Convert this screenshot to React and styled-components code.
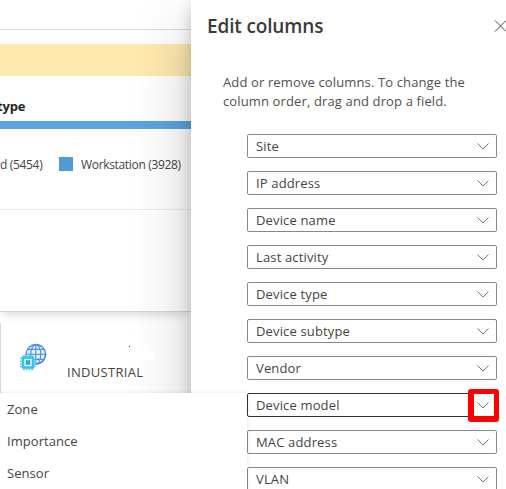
import React from "react";
import styled, { createGlobalStyle } from "styled-components";

const GlobalStyle = createGlobalStyle`
  * { box-sizing: border-box; }
  body { margin: 0; background: #fff; overflow: hidden; }
`;

const Screen = styled.div`
  position: relative;
  display: grid;
  grid-template-columns: 191px 315px;
  width: 506px;
  height: 489px;
  overflow: hidden;
  color: #464442;
  font-family: "Open Sans", "Noto Sans", sans-serif;
  font-size: 13px;
  white-space: nowrap;
`;

const Page = styled.main`
  display: flex;
  flex-direction: column;
  overflow: hidden;
  background: #fff;
`;

const TopBar = styled.header`
  height: 30px;
  flex: none;
  border-bottom: 1px solid #dcdcdc;
`;

const Summary = styled.section`
  height: 282px;
  flex: none;
  padding-top: 14px;
  border-bottom: 1px solid #d4d4d4;
  box-shadow: 0 6px 8px -3px rgba(0, 0, 0, 0.14);
`;

const Banner = styled.div`
  height: 32px;
  background: #ffe9ae;
`;

const ChartTitle = styled.h2`
  height: 45px;
  margin: 0 0 0 -3px;
  padding-top: 21px;
  font-size: 13px;
  line-height: 18px;
  font-weight: 700;
  letter-spacing: -0.2px;
  color: #252423;
`;

const ChartBar = styled.div`
  height: 8px;
  background: #5aa5e0;
`;

const Legend = styled.div`
  display: flex;
  align-items: center;
  height: 81px;
  padding-bottom: 11px;
  border-bottom: 1px solid #eee;
  font-size: 12px;
`;

const LegendText = styled.span`
  width: ${(p) => p.$width}px;
  padding-top: 2px;
  letter-spacing: -0.33px;
`;

const Swatch = styled.span`
  width: 14px;
  height: 14px;
  margin: 0 8px 0 0;
  background: #4f9bd8;
`;

const Site = styled.section`
  display: flex;
  height: 70px;
  margin-top: 11px;
  padding: 20px 0 0 19px;
  border-left: 1px solid #d3d9e8;
`;

const SiteName = styled.div`
  padding: 19px 0 0 20px;
  font-size: 13px;
  line-height: 20px;
  letter-spacing: 0.3px;
`;

const Panel = styled.aside`
  position: relative;
  height: 560px;
  padding: 13px 0 0 16px;
  background: #fff;
  box-shadow: 0 25.6px 57.6px rgba(0, 0, 0, 0.22), 0 4.8px 14.4px rgba(0, 0, 0, 0.18);
`;

const PanelHeader = styled.header`
  display: flex;
  justify-content: space-between;
  align-items: center;
  height: 26px;
`;

const Title = styled.h1`
  margin: 0;
  font-size: 19px;
  line-height: 26px;
  font-weight: 600;
  letter-spacing: -0.15px;
  color: #3b3a39;
`;

const CloseButton = styled.button`
  display: flex;
  width: 12px;
  height: 12px;
  padding: 0;
  border: 0;
  background: none;
`;

const Description = styled.p`
  margin: 34px 0 0 16px;
  height: 38px;
  line-height: 19px;
  letter-spacing: 0.13px;
  color: #52504e;
`;

const Fields = styled.div`
  display: flex;
  flex-direction: column;
  gap: 13px;
  width: 250px;
  margin: 23px 0 0 40px;
`;

const Field = styled.div`
  display: flex;
  align-items: center;
  justify-content: space-between;
  height: 24px;
  flex: none;
  padding: 0 7px 0 8px;
  border: 1px solid ${(p) => (p.$active ? "#323130" : "#8a8886")};
  border-radius: 2px;
  background: #fff;
`;

const FieldLabel = styled.span`
  line-height: 22px;
  letter-spacing: 0.15px;
`;

const Options = styled.ul`
  position: absolute;
  left: -60px;
  top: 393px;
  width: 307px;
  height: 130px;
  margin: 0;
  padding: 0 0 0 67px;
  list-style: none;
  background: #fff;
  box-shadow: 0 0 5px rgba(0, 0, 0, 0.1);
`;

const Option = styled.li`
  height: 32px;
  line-height: 32px;
  letter-spacing: 0.05px;
`;

const Highlight = styled.div`
  position: absolute;
  left: 468px;
  top: 389px;
  width: 31px;
  height: 33px;
  border: solid #f00;
  border-width: 5px 5px 6px 6px;
  border-radius: 3px;
`;

const RedactionTop = styled.div`
  position: absolute;
  left: 114px;
  top: 337px;
  width: 24px;
  height: 14px;
  padding: 9px 0 0 15px;
  background: #fff;

  &::after {
    content: "";
    display: block;
    width: 1px;
    height: 1px;
    background: #323130;
  }
`;

const RedactionBottom = styled.div`
  position: absolute;
  left: 114px;
  top: 351px;
  width: 40px;
  height: 9px;
  background: #fff;
`;

const Chevron = () => (
  <svg width="12" height="7" viewBox="0 0 12 7" fill="none" stroke="#797775">
    <path d="M.5.5 6 6 11.5.5" strokeWidth="1" />
  </svg>
);

const CloseIcon = () => (
  <svg width="12" height="12" viewBox="0 0 12 12" stroke="#484644" strokeWidth="1">
    <path d="M1 .5l11 11M12 .5l-11 11" />
  </svg>
);

const IndustrialIcon = () => (
  <svg width="27" height="28" viewBox="0 0 27 28" fill="none">
    <defs>
      <linearGradient id="globe" x1="0" y1="0" x2="1" y2="1">
        <stop offset="0" stopColor="#4a9af0" />
        <stop offset="1" stopColor="#1570d0" />
      </linearGradient>
    </defs>
    <circle cx="15.8" cy="11.3" r="9.8" fill="#e6f0fd" stroke="url(#globe)" strokeWidth="1.4" />
    <g stroke="#4a90e6" strokeWidth="1.1">
      <ellipse cx="15.8" cy="11.3" rx="5" ry="9.7" />
      <path d="M15.8 1.6v19.4M7.6 6.4h16.4M7.6 16.4h16.4" />
      <path d="M6 11.3h19.6" />
    </g>
    <rect x="1.5" y="13" width="13" height="13" fill="#fff" />
    <path
      stroke="#5fd0ee"
      strokeWidth="1.5"
      d="M4 11.4v16M6.7 11.4v16M9.4 11.4v16M12 11.4v16M0 15.5h16M0 18.2h16M0 20.9h16M0 23.6h16"
    />
    <rect x="1.8" y="13.3" width="12.4" height="12.4" rx="1" fill="#35c3e8" />
    <rect x="5" y="16.5" width="6" height="6" fill="#27b1da" stroke="#fff" strokeWidth="1.3" />
  </svg>
);

const fields = [
  { label: "Site" },
  { label: "IP address" },
  { label: "Device name" },
  { label: "Last activity" },
  { label: "Device type" },
  { label: "Device subtype" },
  { label: "Vendor" },
  { label: "Device model", active: true },
  { label: "MAC address" },
  { label: "VLAN" },
];

const options = ["Zone", "Importance", "Sensor"];

export default function App() {
  return (
    <Screen>
      <GlobalStyle />
      <Page>
        <TopBar />
        <Summary>
          <Banner />
          <ChartTitle>type</ChartTitle>
          <ChartBar />
          <Legend>
            <LegendText $width={59}>d (5454)</LegendText>
            <Swatch />
            <LegendText $width={101}>Workstation (3928)</LegendText>
          </Legend>
        </Summary>
        <Site>
          <IndustrialIcon />
          <SiteName>INDUSTRIAL</SiteName>
        </Site>
      </Page>
      <Panel>
        <PanelHeader>
          <Title>Edit columns</Title>
          <CloseButton aria-label="Close">
            <CloseIcon />
          </CloseButton>
        </PanelHeader>
        <Description>
          Add or remove columns. To change the
          <br />
          column order, drag and drop a field.
        </Description>
        <Fields>
          {fields.map((f) => (
            <Field key={f.label} $active={f.active}>
              <FieldLabel>{f.label}</FieldLabel>
              <Chevron />
            </Field>
          ))}
        </Fields>
      </Panel>
      <RedactionTop />
      <RedactionBottom />
      <Options>
        {options.map((label) => (
          <Option key={label}>{label}</Option>
        ))}
      </Options>
      <Highlight />
    </Screen>
  );
}
